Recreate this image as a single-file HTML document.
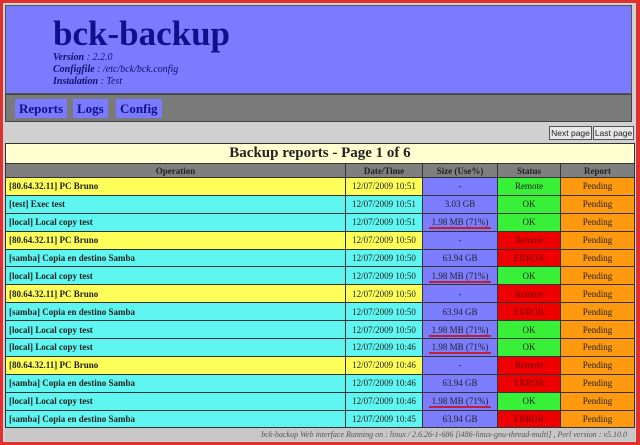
<!DOCTYPE html>
<html><head><meta charset="utf-8"><style>
*{margin:0;padding:0;box-sizing:border-box}
body{width:640px;height:445px;overflow:hidden;background:#d0d0d0;font-family:"Liberation Serif",serif;position:relative}
#bd{position:absolute;left:0;top:0;width:640px;height:445px;border:3px solid #e03030;border-right-width:4px}
#hdr{position:absolute;left:5px;top:5px;width:627px;height:89px;background:#7b7bff;border:1px solid #555}
#hdr h1{position:absolute;left:47px;top:11px;font-size:35px;color:#10108a;font-weight:bold;line-height:34px}
#hdr .i{position:absolute;left:47px;font-size:10px;font-style:italic;color:#101070;line-height:12px}
#nav{position:absolute;left:5px;top:94px;width:627px;height:28px;background:#7a7a7a;border:1px solid #444}
#nav span{position:absolute;top:4px;height:19px;background:#7b7bff;color:#10108a;font-weight:bold;font-size:13px;line-height:19px;padding:0 4px}
.btn{position:absolute;top:126px;height:14px;background:#e8e8e8;border:1px solid #555;font-family:"Liberation Sans",sans-serif;font-size:8.5px;line-height:12px;text-align:center;color:#222;white-space:nowrap}
table{position:absolute;left:5px;top:143px;width:630px;border-collapse:collapse;font-size:9px;table-layout:fixed}
td,th{border:1px solid #333;text-align:center;color:#222;font-weight:normal;white-space:nowrap;overflow:hidden}
tr.r1 td{height:17.9px}
.t td{background:#ffffd0;font-size:15px;font-weight:bold;height:20px}
th{background:#7f7f7f;font-weight:bold;height:14px}
td.o{text-align:left;font-weight:bold;padding-left:3px}
.y td.o,.y td.d{background:#ffff5a}.c td.o,.c td.d{background:#5ff5f0}
td.s{background:#7d7dff}td.g{background:#38f038}td.r{background:#ee0000;color:#700}td.p{background:#ff9a10}
u{text-decoration:none;border-bottom:2px solid #c02030;padding:0 3px}
#ft{position:absolute;left:5px;top:428px;width:630px;height:13px;background:#c8c8c8;font-size:8px;font-style:italic;color:#555;text-align:right;padding-right:8px;line-height:13px}
</style></head><body>
<div id="bd"></div>
<div id="hdr"><h1>bck-backup</h1>
<div class="i" style="top:46px"><b>Version</b> : 2.2.0</div>
<div class="i" style="top:58px"><b>Configfile</b> : /etc/bck/bck.config</div>
<div class="i" style="top:70px"><b>Instalation</b> : Test</div></div>
<div id="nav"><span style="left:9px">Reports</span><span style="left:67px">Logs</span><span style="left:110px">Config</span></div>
<div class="btn" style="left:549px;width:43px">Next page</div><div class="btn" style="left:593px;width:41px">Last page</div>
<table>
<colgroup><col style="width:340px"><col style="width:77px"><col style="width:75px"><col style="width:63px"><col></colgroup>
<tr class="t"><td colspan="5">Backup reports - Page 1 of 6</td></tr>
<tr><th>Operation</th><th>Date/Time</th><th>Size (Use%)</th><th>Status</th><th>Report</th></tr>
<tr class="y r1"><td class="o">[80.64.32.11] PC Bruno</td><td class="d">12/07/2009 10:51</td><td class="s">-</td><td class="g">Remote</td><td class="p">Pending</td></tr>
<tr class="c r1"><td class="o">[test] Exec test</td><td class="d">12/07/2009 10:51</td><td class="s">3.03 GB</td><td class="g">OK</td><td class="p">Pending</td></tr>
<tr class="c r1"><td class="o">[local] Local copy test</td><td class="d">12/07/2009 10:51</td><td class="s"><u>1.98 MB (71%)</u></td><td class="g">OK</td><td class="p">Pending</td></tr>
<tr class="y r1"><td class="o">[80.64.32.11] PC Bruno</td><td class="d">12/07/2009 10:50</td><td class="s">-</td><td class="r">Remote</td><td class="p">Pending</td></tr>
<tr class="c r1"><td class="o">[samba] Copia en destino Samba</td><td class="d">12/07/2009 10:50</td><td class="s">63.94 GB</td><td class="r">ERROR</td><td class="p">Pending</td></tr>
<tr class="c r1"><td class="o">[local] Local copy test</td><td class="d">12/07/2009 10:50</td><td class="s"><u>1.98 MB (71%)</u></td><td class="g">OK</td><td class="p">Pending</td></tr>
<tr class="y r1"><td class="o">[80.64.32.11] PC Bruno</td><td class="d">12/07/2009 10:50</td><td class="s">-</td><td class="r">Remote</td><td class="p">Pending</td></tr>
<tr class="c r1"><td class="o">[samba] Copia en destino Samba</td><td class="d">12/07/2009 10:50</td><td class="s">63.94 GB</td><td class="r">ERROR</td><td class="p">Pending</td></tr>
<tr class="c r1"><td class="o">[local] Local copy test</td><td class="d">12/07/2009 10:50</td><td class="s"><u>1.98 MB (71%)</u></td><td class="g">OK</td><td class="p">Pending</td></tr>
<tr class="c r1"><td class="o">[local] Local copy test</td><td class="d">12/07/2009 10:46</td><td class="s"><u>1.98 MB (71%)</u></td><td class="g">OK</td><td class="p">Pending</td></tr>
<tr class="y r1"><td class="o">[80.64.32.11] PC Bruno</td><td class="d">12/07/2009 10:46</td><td class="s">-</td><td class="r">Remote</td><td class="p">Pending</td></tr>
<tr class="c r1"><td class="o">[samba] Copia en destino Samba</td><td class="d">12/07/2009 10:46</td><td class="s">63.94 GB</td><td class="r">ERROR</td><td class="p">Pending</td></tr>
<tr class="c r1"><td class="o">[local] Local copy test</td><td class="d">12/07/2009 10:46</td><td class="s"><u>1.98 MB (71%)</u></td><td class="g">OK</td><td class="p">Pending</td></tr>
<tr class="c r1"><td class="o">[samba] Copia en destino Samba</td><td class="d">12/07/2009 10:45</td><td class="s">63.94 GB</td><td class="r">ERROR</td><td class="p">Pending</td></tr>
</table>
<div id="ft">bck-backup Web interface Running on : linux / 2.6.26-1-686 [i486-linux-gnu-thread-multi] , Perl version : v5.10.0</div>
</body></html>
